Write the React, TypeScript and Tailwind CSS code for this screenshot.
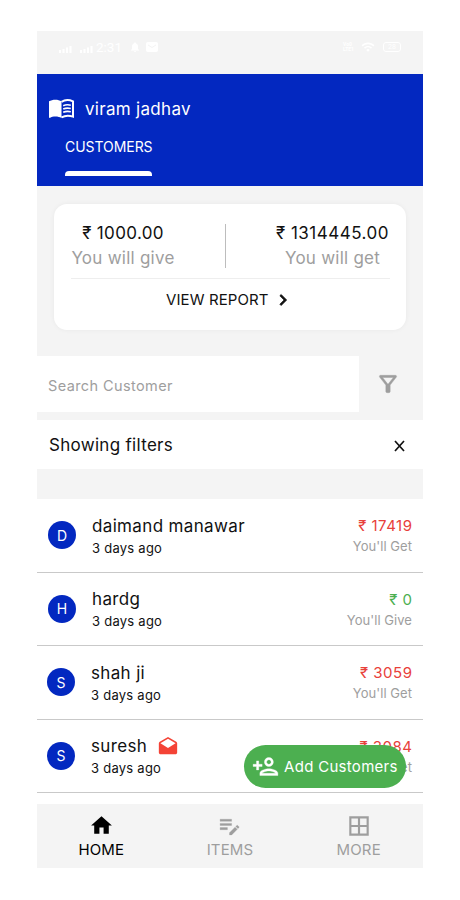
import {
  MdBorderAll,
  MdChevronRight,
  MdDrafts,
  MdEditNote,
  MdHome,
  MdNotifications,
  MdOutlineFilterAlt,
  MdOutlinePersonAdd,
  MdWifi,
} from "react-icons/md";

type Customer = {
  name: string;
  initial: string;
  amount: string;
  give?: boolean;
  mail?: boolean;
};

const CUSTOMERS: Customer[] = [
  { name: "daimand manawar", initial: "D", amount: "17419" },
  { name: "hardg", initial: "H", amount: "0", give: true },
  { name: "shah ji", initial: "S", amount: "3059" },
  { name: "suresh", initial: "S", amount: "3084", mail: true },
];

function Signal() {
  return (
    <svg width="13" height="7" viewBox="0 0 13 7" fill="currentColor">
      <rect x="0" y="4" width="2" height="3" />
      <rect x="3.5" y="3" width="2" height="4" />
      <rect x="7" y="1.5" width="2" height="5.5" />
      <rect x="10.5" y="0" width="2" height="7" />
    </svg>
  );
}

// open book: solid left page, lined right page
function BookIcon() {
  return (
    <svg width="25" height="20" viewBox="0 0 25 20" fill="none" stroke="currentColor">
      <path
        d="M0 2.2C3.5.1 9.3.1 12.5 2.2V19C9.3 17 3.8 17 .8 18.9L0 18.4z"
        fill="currentColor"
        stroke="none"
      />
      <path d="M12.5 2.8C15.6.9 20.5.8 24 2.4V17.6C20.6 16.4 16 16.4 12.5 18.3" strokeWidth="2" />
      <path d="M14.2 6.7c2.3-1 5-1.1 7.6-.5M14.2 10c2.3-1 5-1.1 7.6-.5M14.2 13.3c2.3-1 5-1.1 7.6-.5" strokeWidth="1.6" />
    </svg>
  );
}

function StatusBar() {
  return (
    <div className="h-[43px] px-[22px] pt-[8px] flex justify-between text-white font-normal">
      <div className="h-4 flex items-center">
        <span className="pt-[5px]"><Signal /></span>
        <span className="pt-[5px] ml-2"><Signal /></span>
        <span className="ml-[3px] w-[33px] font-[Roboto,sans-serif] text-[13.5px]">2:31</span>
        <MdNotifications size={12} />
        <svg className="ml-[5px]" width="12" height="10" viewBox="0 0 12 10">
          <rect width="12" height="10" rx="2" fill="currentColor" />
          <path d="M2 3l4 2.5L10 3" fill="none" stroke="#f4f4f4" />
        </svg>
      </div>
      <div className="h-4 flex items-center">
        <div className="w-[13px] font-[Roboto,sans-serif] text-[5px] leading-[5px] font-bold">
          <div>Vo0</div>
          <div>LTE1</div>
        </div>
        <MdWifi className="ml-[5px]" size={14} />
        <div className="ml-[8px] w-[18px] h-[10px] border border-white rounded-[3px] font-[Roboto,sans-serif] text-[7px] leading-[8px] text-center">
          28
        </div>
      </div>
    </div>
  );
}

function Header() {
  return (
    <header className="h-[112px] bg-[#0328c0] text-white">
      <div className="pt-[22px] pl-[12px] flex items-center">
        <BookIcon />
        <h1 className="ml-[11px] pt-px text-[17px] leading-[25px] tracking-[0.3px]">viram jadhav</h1>
      </div>
      <div className="ml-[28px] mt-[15px] w-[87px]">
        <div className="text-[14px] leading-[20px] tracking-[-0.05px] whitespace-nowrap">CUSTOMERS</div>
        <div className="mt-[14px] h-[5px] bg-white rounded-t-[4px]" />
      </div>
    </header>
  );
}

function Summary() {
  return (
    <section className="mt-[18px] mx-[17px] h-[126px] bg-white rounded-[13px] shadow-[0_0_5px_rgba(0,0,0,0.05)] pl-[17px] pr-[16px] pt-[17px]">
      <div className="flex h-[57px] text-center text-[17px] leading-[24px] whitespace-nowrap">
        <div className="w-[104px]">
          <div className="tracking-[0.35px] leading-[25px]">₹ 1000.00</div>
          <div className="text-[#9e9e9e] tracking-[0.25px]">You will give</div>
        </div>
        <div className="ml-[50px] mt-[3px] w-px h-[44px] bg-[#bdbdbd]" />
        <div className="w-[115px] ml-auto">
          <div className="tracking-[0.5px] leading-[25px]">₹ 1314445.00</div>
          <div className="text-[#9e9e9e] tracking-[0.25px]">You will get</div>
        </div>
      </div>
      <div className="border-t border-[#eeeeee] pt-[9px] flex items-center text-[15px] leading-6">
        <span className="ml-[95px] tracking-[0.1px]">VIEW REPORT</span>
        <MdChevronRight
          size={22}
          className="ml-[3px] [&>path[fill=none]]:stroke-none"
          stroke="currentColor"
          strokeWidth={0.8}
        />
      </div>
    </section>
  );
}

function Row({ name, initial, amount, give, mail }: Customer) {
  return (
    <li className="h-[73.5px] border-b border-[#c9c9c9] pl-[10px] pr-[11px] flex items-center first:pl-[11px] nth-2:pl-[11px]">
      <div className="w-[28px] h-[28px] rounded-full bg-[#0328c0] text-white text-[14px] flex items-center justify-center">
        {initial}
      </div>
      <div className="ml-[16px] pt-[2px]">
        <div className="flex items-center text-[17px] leading-[23px] tracking-[0.35px]">
          {name}
          {mail && <MdDrafts size={22} className="ml-[10px] text-[#f44336]" />}
        </div>
        <div className="text-[13px] leading-[20px] tracking-[0.25px]">3 days ago</div>
      </div>
      <div className="ml-auto text-right">
        <div
          className={`text-[15px] leading-[22px] tracking-[0.5px] -mr-[0.5px] ${give ? "text-[#4caf50]" : "text-[#e8403a]"}`}
        >
          ₹ {amount}
        </div>
        <div className="text-[13px] leading-[18px] tracking-[0.05px] text-[#9e9e9e]">
          {give ? "You'll Give" : "You'll Get"}
        </div>
      </div>
    </li>
  );
}

export default function App() {
  return (
    <div className="w-[460px] h-[900px] bg-white pt-[31px] pl-[37px] font-[Inter,sans-serif] font-[380] text-[#111111]">
      <div className="relative w-[386px] h-[837px] bg-[#f4f4f4] flex flex-col">
        <StatusBar />
        <Header />
        <Summary />

        {/* Search */}
        <div className="mt-[26px] h-[56px] flex">
          <div className="w-[322px] bg-white flex items-center pl-[11px] pt-[3px] text-[14.5px] tracking-[0.4px] text-[#9e9e9e]">
            Search Customer
          </div>
          <div className="flex-1 flex items-center justify-center">
            <MdOutlineFilterAlt
              size={26}
              className="text-[#9e9e9e] mr-[6px] [&>path[fill=none]]:stroke-none"
              stroke="currentColor"
              strokeWidth={0.4}
            />
          </div>
        </div>

        {/* Active filters */}
        <div className="mt-[8px] h-[49px] bg-white pl-[12px] pr-[18px] flex items-center justify-between text-[17px] tracking-[0.3px]">
          <span className="pt-[2px]">Showing filters</span>
          <svg className="mt-[2px]" width="11" height="12" viewBox="0 0 11 12">
            <path d="M1 1l9 10M10 1L1 11" stroke="currentColor" strokeWidth="1.7" />
          </svg>
        </div>

        <ul className="mt-[30px] h-[305px] bg-white">
          {CUSTOMERS.map((c) => (
            <Row key={c.name} {...c} />
          ))}
        </ul>

        {/* Bottom nav */}
        <nav className="h-[64px] grid grid-cols-3 text-[15px] text-[#9e9e9e]">
          <div className="pt-[9px] flex flex-col items-center text-black">
            <MdHome size={25} />
            <span className="leading-[24px] tracking-[0.15px]">HOME</span>
          </div>
          <div className="pt-[9px] flex flex-col items-center">
            <MdEditNote
              size={25}
              className="[&>path[fill=none]]:stroke-none"
              stroke="currentColor"
              strokeWidth={0.3}
            />
            <span className="leading-[24px] tracking-[0.15px]">ITEMS</span>
          </div>
          <div className="pt-[9px] flex flex-col items-center">
            <MdBorderAll size={26} className="-mb-px" />
            <span className="leading-[24px] tracking-[0.15px]">MORE</span>
          </div>
        </nav>

        <button className="absolute left-[207px] top-[714px] w-[162px] h-[43px] rounded-full bg-[#4caf50] text-white flex items-center pl-[8px] text-[15px] tracking-[0.3px] whitespace-nowrap">
          <MdOutlinePersonAdd
            size={27}
            className="[&>path[fill=none]]:stroke-none"
            stroke="currentColor"
            strokeWidth={0.3}
          />
          <span className="ml-[5px] pt-[2px]">Add Customers</span>
        </button>
      </div>
    </div>
  );
}
